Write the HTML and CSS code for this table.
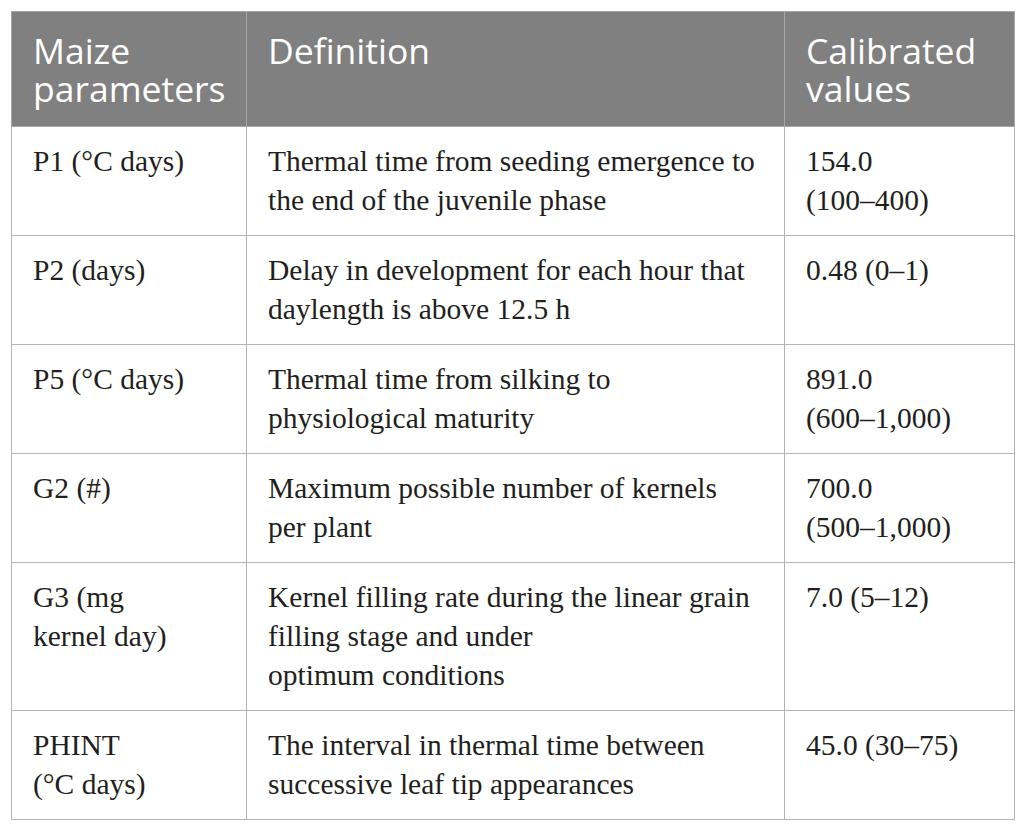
FILE: index.html
```html
<!DOCTYPE html>
<html lang="en">
<head>
    <meta charset="UTF-8">
    <title>Maize parameters</title>
    <link rel="stylesheet" href="styles.css">
</head>
<body>
    <table class="params">
        <thead>
            <tr>
                <th class="col-name">Maize<br>parameters</th>
                <th class="col-def">Definition</th>
                <th class="col-val">Calibrated<br>values</th>
            </tr>
        </thead>
        <tbody>
            <tr>
                <td>P1 (°C days)</td>
                <td>Thermal time from seeding emergence to<br>the end of the juvenile phase</td>
                <td>154.0<br>(100–400)</td>
            </tr>
            <tr>
                <td>P2 (days)</td>
                <td>Delay in development for each hour that<br>daylength is above 12.5 h</td>
                <td>0.48 (0–1)</td>
            </tr>
            <tr>
                <td>P5 (°C days)</td>
                <td>Thermal time from silking to<br>physiological maturity</td>
                <td>891.0<br>(600–1,000)</td>
            </tr>
            <tr>
                <td>G2 (#)</td>
                <td>Maximum possible number of kernels<br>per plant</td>
                <td>700.0<br>(500–1,000)</td>
            </tr>
            <tr>
                <td>G3 (mg<br>kernel day)</td>
                <td>Kernel filling rate during the linear grain<br>filling stage and under<br>optimum conditions</td>
                <td>7.0 (5–12)</td>
            </tr>
            <tr>
                <td>PHINT<br>(°C days)</td>
                <td>The interval in thermal time between<br>successive leaf tip appearances</td>
                <td>45.0 (30–75)</td>
            </tr>
        </tbody>
    </table>
</body>
</html>
```

FILE: styles.css
```css
body {
    margin: 0;
    padding: 11px;
    background: #fff;
}

.params {
    border-collapse: collapse;
    width: 1003px;
    table-layout: fixed;
}

th, td {
    box-sizing: border-box;
}

.col-name { width: 235px; }
.col-def { width: 538px; }
.col-val { width: 230px; }

th {
    background-color: #808080;
    color: #fff;
    font-family: "Open Sans", sans-serif;
    font-weight: normal;
    font-size: 35.5px;
    line-height: 38px;
    text-align: left;
    vertical-align: top;
    padding: 19px 6px 19px 21px;
    border: 1px solid #a6a6a6;
    height: 115px;
    white-space: nowrap;
}

td {
    font-family: "Liberation Serif", serif;
    font-size: 29.5px;
    line-height: 39px;
    color: #231f20;
    vertical-align: top;
    padding: 15px 6px 15px 21px;
    border: 1px solid #b3b3b3;
    white-space: nowrap;
}
```
